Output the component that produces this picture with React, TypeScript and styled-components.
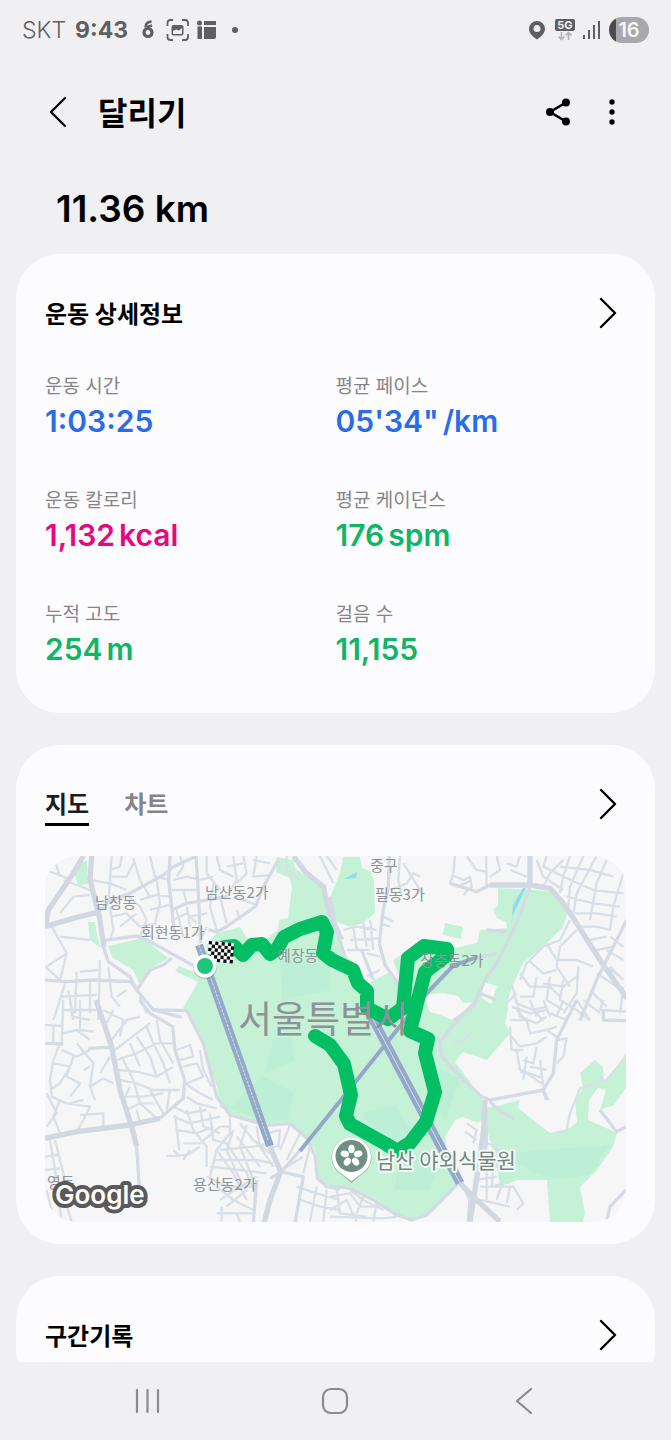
import React from "react";
import styled, { createGlobalStyle } from "styled-components";

const GlobalStyle = createGlobalStyle`
  * { box-sizing: border-box; }
  body {
    margin: 0;
    background: #f0f0f2;
    color: #000;
    font-family: Inter, "Noto Sans CJK KR", sans-serif;
  }
  button { border: 0; padding: 0; background: none; color: inherit; font: inherit; cursor: pointer; }
  svg { display: block; }
`;

const Screen = styled.div`
  height: 100vh;
  display: flex;
  flex-direction: column;
`;

const StatusBar = styled.header`
  flex: none;
  height: 60px;
  padding: 0 22px;
  display: flex;
  align-items: center;
  justify-content: space-between;
  color: #5f5f61;
`;

const StatusGroup = styled.div<{ $gap: number }>`
  display: flex;
  align-items: center;
  gap: ${(p) => p.$gap}px;
`;

const Carrier = styled.span`
  font-size: 23px;
  font-weight: 300;
`;

const Clock = styled.time`
  margin-right: 4px;
  font-size: 23px;
  font-weight: 700;
`;

const Battery = styled.div`
  width: 40px;
  height: 26px;
  border-radius: 13px;
  background: linear-gradient(90deg, #4c4c4e 7px, #a8a8aa 7px);
  color: #f5f5f7;
  font-size: 20px;
  font-weight: 600;
  line-height: 26px;
  text-align: center;
`;

const Scroll = styled.main`
  flex: 1;
  min-height: 0;
  overflow-y: auto;
  scrollbar-width: none;
`;

const AppBar = styled.div`
  height: 104px;
  padding: 0 39px 0 38px;
  display: flex;
  align-items: center;
  gap: 14px;
`;

const IconButton = styled.button`
  width: 40px;
  height: 40px;
  display: grid;
  place-items: center;
`;

const PageTitle = styled.h1`
  flex: 1;
  margin: 0 0 0 6px;
  padding-top: 3px;
  font-size: 32px;
  font-weight: 700;
  line-height: 40px;
`;

const Distance = styled.p`
  margin: 0;
  padding: 0 56px;
  font-size: 37px;
  font-weight: 600;
  line-height: 90px;
`;

const Cards = styled.div`
  padding: 0 16px 32px;
  display: grid;
  gap: 32px;
`;

const Card = styled.section<{ $bottom: number }>`
  padding: 29px 29px ${(p) => p.$bottom}px;
  border-radius: 44px;
  background: #fcfcfe;
`;

const CardHeader = styled.div`
  height: 60px;
  display: flex;
  align-items: center;
  justify-content: space-between;
`;

const CardTitle = styled.h2`
  margin: 0;
  padding-top: 3px;
  font-size: 24px;
  font-weight: 700;
  line-height: 36px;
`;

const MoreButton = styled.button`
  width: 36px;
  height: 44px;
  display: grid;
  place-items: center;
`;

const Stats = styled.dl`
  margin: 28px 0 0;
  display: grid;
  grid-template-columns: 1fr 1fr;
  row-gap: 46px;
`;

const StatLabel = styled.dt`
  color: #858587;
  font-size: 19px;
  line-height: 32px;
`;

const StatValue = styled.dd<{ $color: string }>`
  margin: 0;
  color: ${(p) => p.$color};
  font-size: 30px;
  font-weight: 600;
  line-height: 36px;
`;

const Unit = styled.span`
  margin-left: 4px;
`;

const Tabs = styled.div`
  display: flex;
  gap: 35px;
`;

const Tab = styled.button<{ $active?: boolean }>`
  height: 44px;
  padding-top: 5px;
  border-bottom: 3px solid ${(p) => (p.$active ? "#000" : "transparent")};
  color: ${(p) => (p.$active ? "#1c1c1e" : "#858587")};
  font-size: 24px;
  font-weight: 700;
  line-height: 36px;
`;

const MapFrame = styled.div`
  margin-top: 22px;
  border-radius: 32px;
  overflow: hidden;
  svg { width: 100%; height: auto; }
`;

const NavBar = styled.nav`
  flex: none;
  height: 78px;
  padding: 0 53px;
  display: flex;
  align-items: center;
  background: #f0f0f2;
  color: #8a8a8c;
`;

const NavButton = styled.button`
  flex: 1;
  height: 48px;
  display: grid;
  place-items: center;
`;

const Chevron = () => (
  <svg width="20" height="32" viewBox="0 0 20 32" fill="none" stroke="#000" strokeWidth="2.4" strokeLinecap="round" strokeLinejoin="round">
    <path d="M3 2 L17 16 L3 30" />
  </svg>
);

const More = ({ label }: { label: string }) => (
  <MoreButton aria-label={label}>
    <Chevron />
  </MoreButton>
);

const BLUE = "#2a6be8";
const PINK = "#e5097f";
const GREEN = "#12b566";

const stats = [
  { label: "운동 시간", value: "1:03:25", unit: "", color: BLUE },
  { label: "평균 페이스", value: "05'34\"", unit: "/km", color: BLUE },
  { label: "운동 칼로리", value: "1,132", unit: "kcal", color: PINK },
  { label: "평균 케이던스", value: "176", unit: "spm", color: GREEN },
  { label: "누적 고도", value: "254", unit: "m", color: GREEN },
  { label: "걸음 수", value: "11,155", unit: "", color: GREEN },
];

/* The street network is drawn at three times the map's scale, one set per quarter. */
const quarters = [
  {
    at: "translate(40 780) scale(.3333)",
    wide: "M15 445 L25 390 L100 280 L130 228 M15 440 L110 412 L180 395 M155 228 L150 300 L178 410 L192 500 M760 228 L800 280 L850 320 L868 400 L905 480",
    mid: "M180 390 L215 360 L270 340 L370 285 L400 260 L470 228 M390 228 L386 300 L396 390 L402 450 M468 228 L474 320 L482 490 M190 482 L290 468 L330 485 L430 540 L470 562 M190 500 L205 545 L270 590 L290 630 L340 690 L425 712 M290 630 L330 570 L370 555 L395 535 M715 240 L690 285 L665 330 L648 378 L560 440 L530 455 L505 450 M395 390 L440 370 L560 350 M15 600 L80 605 L160 600 L270 605",
    thin: "M15 270 L60 285 L90 300 M40 228 L60 290 M70 300 L150 330 M150 345 L100 350 L60 400 M215 228 L210 300 L205 370 M150 300 L210 310 L260 330 M245 228 L240 260 L210 270 M280 235 L300 300 L330 350 M330 228 L345 290 L390 300 M215 290 L260 290 L280 250 M260 345 L300 380 L320 420 L300 470 M210 380 L220 450 L210 480 M215 410 L260 400 L300 440 L350 430 M300 360 L350 345 L390 350 M330 390 L390 375 M350 300 L360 370 L345 430 M290 400 L240 440 M400 300 L440 290 L480 300 L520 290 M420 228 L430 260 L410 290 M500 228 L500 280 L540 330 M530 228 L540 270 L580 290 M395 330 L470 330 M430 330 L440 370 M400 420 L440 400 L470 430 M410 390 L430 470 M440 380 L450 440 M520 310 L510 380 L530 450 M540 350 L560 430 M580 228 L590 300 L560 350 M610 228 L620 280 L590 310 M640 240 L690 250 M650 228 L640 290 L690 285 M560 260 L610 250 M580 350 L650 375 M590 390 L600 420 M500 400 L450 410 M30 430 L80 520 L60 600 M60 470 L150 480 M80 520 L20 560 M15 560 L60 600 M75 610 L60 660 L40 720 M60 650 L170 645 M110 575 L105 700 M150 605 L150 700 M180 540 L175 720 M70 690 L170 690 M85 630 L100 720 M205 560 L215 650 L240 680 M230 650 L260 630 M120 575 L175 570 M270 605 L285 625 M300 650 L320 700 M740 228 L740 270 L780 300 M860 228 L890 270 M840 228 L880 310 M480 480 L500 440",
  },
  {
    at: "translate(330 780) scale(.3333)",
    wide: "M600 228 L600 315 L660 325 L700 370 L740 430 L810 540 L890 655 M480 315 L600 315",
    mid: "M0 350 L20 450 L45 530 M178 228 L175 320 L158 400 L148 490 M600 320 L572 400 L545 460 L500 550 L465 600 L430 680 L370 722 M148 490 L165 555 L200 605 L208 640 M360 310 L440 335 L480 315 M890 420 L860 480 L800 600 L750 722 M470 450 L530 455 M400 545 L500 520 M450 640 L500 660 M95 510 L130 600",
    thin: "M210 228 L205 300 L215 350 M180 330 L230 310 L250 280 L270 290 M220 250 L270 330 L260 345 M40 450 L80 440 L140 450 M60 480 L150 475 M70 440 L80 510 M100 430 L110 500 M120 420 L130 510 M50 510 L120 510 M150 430 L180 440 M160 410 L190 425 M110 590 L150 570 M150 530 L110 520 M375 228 L370 280 L360 310 M410 228 L440 270 L470 275 M468 228 L470 315 M365 285 L400 300 L420 290 L425 320 L400 345 M385 320 L425 300 M500 228 L510 270 L480 290 M530 250 L560 260 L570 228 M540 270 L590 290 M620 240 L640 290 L700 330 M650 228 L640 260 L700 290 L790 330 L880 340 M640 320 L660 280 L700 240 M720 228 L700 290 L690 340 M760 228 L720 320 L715 380 M800 228 L740 340 L730 400 M830 240 L800 310 L780 420 M880 280 L850 380 L840 450 M690 260 L780 270 L850 290 M710 350 L790 370 L870 380 M735 400 L800 400 L860 410 M750 440 L800 440 L840 450 M780 480 L830 470 M800 510 L850 500 M840 470 L880 500 M830 510 L880 540 M810 550 L870 590 M800 580 L860 620 M780 630 L830 680 M760 660 L810 700 M740 690 L780 722 M840 560 L880 600 M880 620 L870 700 M720 420 L690 480 L640 500 L590 550 L570 600 M740 450 L690 500 L680 560 L720 620 M650 490 L680 540 L740 540 L790 560 M600 545 L640 580 L680 570 M570 580 L600 620 L660 620 L690 650 M545 610 L560 670 L610 690 L650 680 M620 590 L610 650 L570 650 M660 590 L650 660 L700 690 M700 600 L690 660 L740 690 M640 610 L700 620 L740 590 M560 690 L590 722 M620 700 L640 722 M530 670 L560 640 M745 560 L740 640 L700 700",
  },
  {
    at: "translate(40 1000) scale(.3333)",
    wide: "M168 0 L215 140 L240 270 L275 380 L290 440 M690 440 L722 515 L690 600 L672 670 M15 415 L110 395 L270 375 L360 355",
    mid: "M290 440 L298 560 M360 355 L430 295 L434 240 L405 150 L398 80 L330 40 L298 0 M340 30 L440 32 L490 130 L530 290 L570 345 L680 376 L750 370 L800 415 L826 470 L832 535 L860 560 L900 568 M785 445 L722 518 L690 535 M145 145 L215 142 M15 130 L70 132 M722 515 L790 530 L765 670 M650 540 L640 670",
    thin: "M70 0 L65 130 M15 75 L65 78 M40 75 L40 130 M90 0 L100 50 L150 60 M120 0 L120 90 L160 95 M70 100 L110 90 L150 120 M60 130 L40 180 L30 240 L35 290 M65 150 L110 170 L150 150 M40 190 L90 200 L60 250 L30 270 M100 170 L80 230 L120 250 L90 290 M110 130 L160 190 L150 260 L165 300 M130 210 L150 200 M35 290 L80 310 L150 320 L130 360 L110 395 M20 280 L50 340 L20 380 M60 300 L40 350 L60 400 M120 345 L190 340 L190 385 M90 310 L130 300 M150 260 L190 235 L220 250 M210 170 L180 220 M225 150 L290 100 L330 70 M215 120 L260 60 L300 50 M190 30 L250 60 L240 110 M220 30 L200 70 M230 180 L290 160 L350 130 L400 130 M235 210 L290 215 L350 230 L400 200 M240 240 L290 250 L340 270 L420 270 M245 170 L280 240 L300 310 L350 355 M290 110 L330 170 L350 230 M320 80 L340 130 L370 190 L390 250 M350 60 L360 120 L400 190 M270 130 L300 200 M260 290 L310 290 L370 280 M260 330 L300 310 L340 310 M270 260 L250 300 M290 330 L300 370 M330 270 L370 340 M390 270 L380 330 M410 150 L450 135 L460 170 L420 180 M430 200 L470 190 L490 230 L440 250 M480 150 L490 210 L515 260 M435 250 L480 280 L520 300 M440 290 L470 310 L530 325 M400 320 L440 340 L500 330 M405 345 L418 450 M380 468 L440 465 L480 440 M400 350 L450 370 L540 350 M440 330 L460 390 L500 440 L500 500 M480 320 L490 380 L540 400 M510 340 L520 420 L560 430 M410 390 L470 400 L520 380 M430 430 L480 430 L540 380 L570 380 M420 470 L400 450 M450 450 L430 480 M570 345 L570 400 L530 450 L510 530 M600 370 L640 420 L690 460 M580 390 L560 450 L600 540 M620 375 L600 440 L640 540 M650 380 L660 440 L700 500 M540 450 L640 440 L690 430 M525 480 L650 480 L700 490 M510 500 L600 510 L680 520 M500 530 L560 560 L650 560 M530 450 L580 520 L620 600 M560 430 L620 520 L650 590 M590 410 L660 500 M530 560 L580 600 L640 630 M540 600 L600 560 L650 530 M560 620 L620 570 M530 640 L640 640 M545 620 L545 665 M590 640 L600 665 M680 400 L720 390 L715 440 L690 440 M750 375 L720 450 M780 400 L740 480 M810 440 L790 520 M790 470 L740 500 M770 560 L830 580 L900 600 M780 600 L840 620 L900 630 M830 560 L810 665 M860 570 L850 665 M30 420 L50 540 M45 420 L75 540 M15 470 L55 465 M15 510 L60 505 M55 590 L65 665 M75 600 L95 665 M20 570 L35 630",
  },
  {
    at: "translate(330 1000) scale(.3333)",
    wide: "M465 300 L460 400 L432 590 L420 665 M390 550 L440 600 L510 665",
    mid: "M440 0 L375 70 L330 125 L335 170 L400 240 L455 290 L480 300 L560 285 L640 270 L670 220 L680 120 L740 0 M640 270 L650 300 M480 305 L505 330 L550 355 M380 555 L290 645 L245 660 L200 645 L130 600 L60 565 L0 558 M465 300 L470 420 L460 500 M820 30 L820 60 L890 62 M888 570 L840 620 L830 665 M810 330 L860 395 L888 380 M395 545 L420 600 L415 665",
    thin: "M820 0 L810 30 L888 35 M740 0 L780 60 M545 20 L600 40 L650 30 M560 0 L570 50 L620 70 L650 50 M540 60 L590 60 L600 100 L650 90 L680 80 M600 0 L620 50 M640 0 L660 50 M545 110 L570 140 L620 130 L650 110 M540 80 L545 150 L580 150 M560 150 L570 210 L640 235 M590 170 L580 240 M630 180 L640 260 M600 200 L650 210 M620 140 L610 190 L580 180 M680 120 L710 115 L700 170 L680 190 M650 90 L680 110 M570 215 L590 220 L650 260 M640 270 L655 300 M700 0 L680 50 M660 40 L710 60 M410 370 L440 390 L430 430 M405 395 L440 420 M470 430 L500 440 L500 500 M440 500 L520 500 M435 540 L500 530 M470 500 L470 600 M490 500 L485 560 L520 550 M450 560 L550 560 L580 610 L560 630 M520 540 L500 600 M540 560 L530 610 M450 600 L540 620 M0 590 L60 580 L90 620 L150 620 M0 630 L50 600 L80 665 M20 570 L30 640 L110 650 M60 570 L100 600 L160 630 M100 590 L80 640 M140 610 L130 665 M0 650 L160 655 L200 650 M888 170 L830 240 L750 265 L720 340 L710 390 L680 400 M370 130 L400 120 L430 90",
  },
];

const parks = [
  "M277 857 L293 860 L295 868 L307 877 L317 883 L323 890 L331 917 L341 945 L348 958 L358 965 L366 985 L374 980 L390 972 L398 980 L398 990 L402 998 L402 985 L393 960 L402 954 L425 942 L455 948 L477 943 L480 930 L507 928 L506 922 L497 918 L493 910 L498 905 L498 888 L550 891 L560 898 L568 912 L563 927 L547 943 L523 963 L512 987 L508 1000 L508 1010 L505 1023 L510 1033 L487 1060 L463 1052 L455 1062 L480 1095 L485 1107 L493 1107 L520 1100 L518 1108 L537 1123 L550 1133 L570 1128 L577 1122 L575 1100 L583 1088 L580 1073 L595 1060 L603 1067 L604 1080 L612 1075 L626 1053 L626 1088 L614 1105 L600 1110 L606 1090 L598 1088 L589 1100 L588 1120 L602 1126 L617 1133 L613 1147 L597 1170 L580 1187 L585 1213 L583 1222 L550 1222 L547 1180 L517 1180 L500 1187 L497 1167 L488 1133 L484 1118 L478 1123 L463 1117 L455 1120 L445 1137 L447 1153 L460 1183 L427 1213 L412 1219 L397 1215 L377 1200 L350 1187 L323 1185 L317 1173 L315 1150 L303 1133 L287 1122 L267 1124 L240 1118 L220 1107 L217 1087 L207 1060 L200 1033 L183 1008 L198 982 L175 971 L179 966 L202 975 L207 945 L217 933 L240 927 L247 938 L262 942 L278 930 L279 920 L288 918 L292 888 L290 878 L276 872 Z",
  "M340 873 L343 857 L360 857 L362 868 L370 871 L374 880 L375 913 L363 923 L350 927 L333 920 L331 895 Z",
  "M445 923 L463 927 L461 939 L443 935 Z",
  "M77 865 L87 860 L88 884 L78 886 L75 875 Z",
  "M88 922 L95 922 L97 935 L101 948 L90 940 Z",
  "M108 946 L143 938 L168 958 L147 971 L140 985 L133 970 L112 957 Z",
];

const clearings = [
  "M424 995 L443 993 L458 996 L463 1003 L476 1002 L455 1021 L438 1014 L430 1012 Z",
  "M483 982 L497 986 L491 1004 L482 998 Z",
];

const woodland = [
  "M273 1040 L292 1036 L295 1060 L265 1073 Z",
  "M262 1076 L294 1093 L288 1120 L262 1121 L230 1108 Z",
  "M362 1113 L395 1105 L415 1135 L400 1145 L365 1120 Z",
  "M400 1150 L440 1160 L430 1190 L395 1190 Z",
  "M440 1070 L460 1078 L445 1120 L430 1090 Z",
  "M500 1155 L540 1150 L610 1145 L590 1175 L550 1180 Z",
  "M280 960 L330 966 L330 990 L282 1000 Z",
];

const places = [
  { name: "남창동", x: 95, y: 908 },
  { name: "남산동2가", x: 205, y: 898 },
  { name: "회현동1가", x: 141, y: 938 },
  { name: "중구", x: 370, y: 871 },
  { name: "필동3가", x: 375, y: 900 },
  { name: "예장동", x: 277, y: 961 },
  { name: "장충동2가", x: 420, y: 966 },
  { name: "용산동2가", x: 193, y: 1190 },
  { name: "영동", x: 47, y: 1188 },
];

const route =
  "M224 947 L234 946 L243 955 L252 945 L262 944 L270 954 L277 949 L284 937 L300 929 L322 922 L327 932 L323 953 L332 960 L353 970 L358 983 L367 991 L367 1008 L388 1019 L403 1008 L408 958 L424 946 L447 949 L447 955 L425 972 L417 1003 L410 1031 L428 1039 L425 1053 L435 1092 L426 1122 L410 1143 L397 1151 L386 1144 L350 1124 L346 1116 L351 1095 L344 1064 L330 1045 L315 1036";

const RouteMap = () => (
  <svg viewBox="45 856 581 366" role="img" aria-label="달리기 경로 지도">
    <rect x="45" y="856" width="581" height="366" fill="#f6f6f7" />
    <g fill="#c5f2d7">
      {parks.map((d) => <path key={d} d={d} />)}
    </g>
    <g fill="#b5edd5" opacity=".55">
      {woodland.map((d) => <path key={d} d={d} />)}
    </g>
    <g fill="#f6f6f7">
      {clearings.map((d) => <path key={d} d={d} />)}
    </g>
    <path d="M344 879 L357 872 L356 878 Z M523 888 L526 888 L512 917 L513 905 Z" fill="#8fdbee" />
    {quarters.map((q) => (
      <g key={q.at} transform={q.at} fill="none" stroke="#d9dfe7" strokeLinejoin="round">
        <path d={q.thin} strokeWidth="7" />
        <path d={q.mid} strokeWidth="10" stroke="#d5dbe4" />
        <path d={q.wide} strokeWidth="16" stroke="#d2d8e1" />
      </g>
    ))}
    <g fill="none" stroke="#94a8ca">
      <path d="M199 945 L270 1146" strokeWidth="8" />
      <path d="M367 1008 L460 1183" strokeWidth="9" />
      <path d="M477 957 L453 966 L426 994 L397 1030 L357 1080 L300 1151" strokeWidth="4" />
    </g>
    <g fill="none" stroke="#d5deed" strokeWidth="1">
      <path d="M199 945 L268 1140" strokeDasharray="3 1" />
      <path d="M367 1008 L460 1183" />
    </g>
    <path d={route} fill="none" stroke="#03be63" strokeWidth="14" strokeLinecap="round" strokeLinejoin="round" />
    <g fontFamily='"Noto Sans CJK KR", sans-serif' fill="#8e9398">
      {places.map((p) => (
        <text key={p.name} x={p.x} y={p.y} fontSize="15">{p.name}</text>
      ))}
      <text x="238" y="1033" fontSize="37">서울특별시</text>
      <text x="376" y="1168" fontSize="21" fill="#75877e" stroke="#f3faf6" strokeWidth="4" strokeLinejoin="round" paintOrder="stroke">
        남산 야외식물원
      </text>
    </g>
    <g transform="rotate(5 221 953)">
      <rect x="208" y="942" width="25" height="20" fill="#fff" />
      {Array.from({ length: 48 }, (_, i) => {
        const row = Math.floor(i / 8);
        const col = i % 8;
        return (row + col) % 2 === 0 ? (
          <rect key={i} x={208 + col * 3.2} y={942 + row * 3.4} width="3.2" height="3.4" fill="#111" />
        ) : null;
      })}
    </g>
    <circle cx="205" cy="967" r="12" fill="#7d8a86" opacity=".35" />
    <circle cx="205" cy="966" r="11.5" fill="#fff" />
    <circle cx="205" cy="966" r="8" fill="#1fc77c" />
    <path d="M351.500 1183 L342 1175 A20 20 0 1 1 361 1175 Z" fill="#6d7873" opacity=".5" />
    <path d="M351.500 1181 L342 1174 A19.500 19.500 0 1 1 361 1174 Z" fill="#fff" />
    <circle cx="351.500" cy="1156" r="16" fill="#6f8f80" />
    <g fill="#fff" transform="translate(351.500 1156)">
      {[0, 72, 144, 216, 288].map((a) => (
        <ellipse key={a} cx="0" cy="-7" rx="3.200" ry="4.300" transform={`rotate(${a})`} />
      ))}
    </g>
    <text x="55" y="1204" fontFamily="Inter, sans-serif" fontSize="26" fontWeight="600" fill="#fff" stroke="#5a5a5c" strokeWidth="8" strokeLinejoin="round" paintOrder="stroke">
      Google
    </text>
  </svg>
);

export default function App() {
  return (
    <Screen>
      <GlobalStyle />
      <StatusBar>
        <StatusGroup $gap={9}>
          <Carrier>SKT</Carrier>
          <Clock>9:43</Clock>
          <svg width="98" height="24" viewBox="0 0 98 24" fill="#5f5f61">
            <g fill="none" stroke="#5f5f61">
              <circle cx="7" cy="14.500" r="4" strokeWidth="3.200" />
              <path d="M4.500 9.500 C4.500 5.500 7 3.600 10.500 3.600 M6 9 L11 7.500" strokeWidth="2.600" />
              <path d="M26.500 8 V5 Q26.500 2 29.500 2 H32 M41 2 H44 Q47 2 47 5 V8 M47 16 V19 Q47 22 44 22 H41 M32 22 H29.500 Q26.500 22 26.500 19 V16" strokeWidth="1.800" />
            </g>
            <path fillRule="evenodd" d="M32.500 7 H40.500 Q42.500 7 42.500 9 V15.500 Q42.500 17.500 40.500 17.500 H32.500 Q30.500 17.500 30.500 15.500 V9 Q30.500 7 32.500 7 Z M32 13 L35 11.500 L38 12.500 L41 10 V16 H32 Z" />
            <circle cx="58.500" cy="5" r="2.500" />
            <path d="M63 3 H75 V7 H63 Z M56.500 8.500 H61 V21 H56.500 Z M63 9 H75 V19 Q75 21 73 21 H63 Z" />
            <circle cx="94" cy="12" r="3" />
          </svg>
        </StatusGroup>
        <StatusGroup $gap={9}>
          <svg width="71" height="26" viewBox="0 0 71 26" fill="#5f5f61">
            <path fillRule="evenodd" d="M8 4 A8 8 0 0 1 16 12 C16 16 12 20 8 22.500 C4 20 0 16 0 12 A8 8 0 0 1 8 4 Z M8 8 A3.500 3.500 0 1 0 8 15 A3.500 3.500 0 1 0 8 8 Z" />
            <rect x="26" y="2" width="20" height="12" rx="2" />
            <text x="36" y="12" fontSize="11" fontWeight="700" fill="#f0f0f2" textAnchor="middle">5G</text>
            <path d="M32.500 15 V22 M29.500 19.500 L32.500 22.500 L35.500 19.500 M39.500 23 V16 M36.500 18.500 L39.500 15.500 L42.500 18.500" fill="none" stroke="#b2b2b4" strokeWidth="1.600" />
            <path d="M54 18 H56 V22 H54 Z M59 13 H61 V22 H59 Z M64 8 H66 V22 H64 Z M69 4 H71 V22 H69 Z" />
          </svg>
          <Battery>16</Battery>
        </StatusGroup>
      </StatusBar>

      <Scroll>
        <AppBar>
          <IconButton aria-label="뒤로">
            <svg width="20" height="32" viewBox="0 0 20 32" fill="none" stroke="#000" strokeWidth="2.200" strokeLinecap="round" strokeLinejoin="round">
              <path d="M17 2 L3 16 L17 30" />
            </svg>
          </IconButton>
          <PageTitle>달리기</PageTitle>
          <IconButton aria-label="공유">
            <svg width="26" height="28" viewBox="0 0 26 28">
              <path d="M21 4.500 L5 14 L21 23.500" fill="none" stroke="#000" strokeWidth="2.600" />
              <circle cx="21" cy="4.500" r="4" />
              <circle cx="5" cy="14" r="4" />
              <circle cx="21" cy="23.500" r="4" />
            </svg>
          </IconButton>
          <IconButton aria-label="더보기">
            <svg width="6" height="26" viewBox="0 0 6 26">
              <circle cx="3" cy="3" r="2.700" />
              <circle cx="3" cy="13" r="2.700" />
              <circle cx="3" cy="23" r="2.700" />
            </svg>
          </IconButton>
        </AppBar>

        <Distance>11.36 km</Distance>

        <Cards>
          <Card $bottom={46}>
            <CardHeader>
              <CardTitle>운동 상세정보</CardTitle>
              <More label="운동 상세정보 보기" />
            </CardHeader>
            <Stats>
              {stats.map((s) => (
                <div key={s.label}>
                  <StatLabel>{s.label}</StatLabel>
                  <StatValue $color={s.color}>
                    {s.value}
                    {s.unit && <Unit>{s.unit}</Unit>}
                  </StatValue>
                </div>
              ))}
            </Stats>
          </Card>

          <Card $bottom={22}>
            <CardHeader>
              <Tabs role="tablist">
                <Tab role="tab" aria-selected="true" $active>지도</Tab>
                <Tab role="tab" aria-selected="false">차트</Tab>
              </Tabs>
              <More label="지도 보기" />
            </CardHeader>
            <MapFrame>
              <RouteMap />
            </MapFrame>
          </Card>

          <Card $bottom={29}>
            <CardHeader>
              <CardTitle>구간기록</CardTitle>
              <More label="구간기록 보기" />
            </CardHeader>
          </Card>
        </Cards>
      </Scroll>

      <NavBar>
        <NavButton aria-label="최근 앱">
          <svg width="26" height="26" viewBox="0 0 26 26" fill="none" stroke="currentColor" strokeWidth="2.200" strokeLinecap="round">
            <path d="M3 2 V24 M13.500 2 V24 M24 2 V24" />
          </svg>
        </NavButton>
        <NavButton aria-label="홈">
          <svg width="28" height="28" viewBox="0 0 28 28" fill="none" stroke="currentColor" strokeWidth="2.200">
            <rect x="2" y="2" width="24" height="24" rx="8" />
          </svg>
        </NavButton>
        <NavButton aria-label="뒤로 가기">
          <svg width="18" height="28" viewBox="0 0 18 28" fill="none" stroke="currentColor" strokeWidth="2.200" strokeLinecap="round" strokeLinejoin="round">
            <path d="M16 2 L2 14 L16 26" />
          </svg>
        </NavButton>
      </NavBar>
    </Screen>
  );
}
